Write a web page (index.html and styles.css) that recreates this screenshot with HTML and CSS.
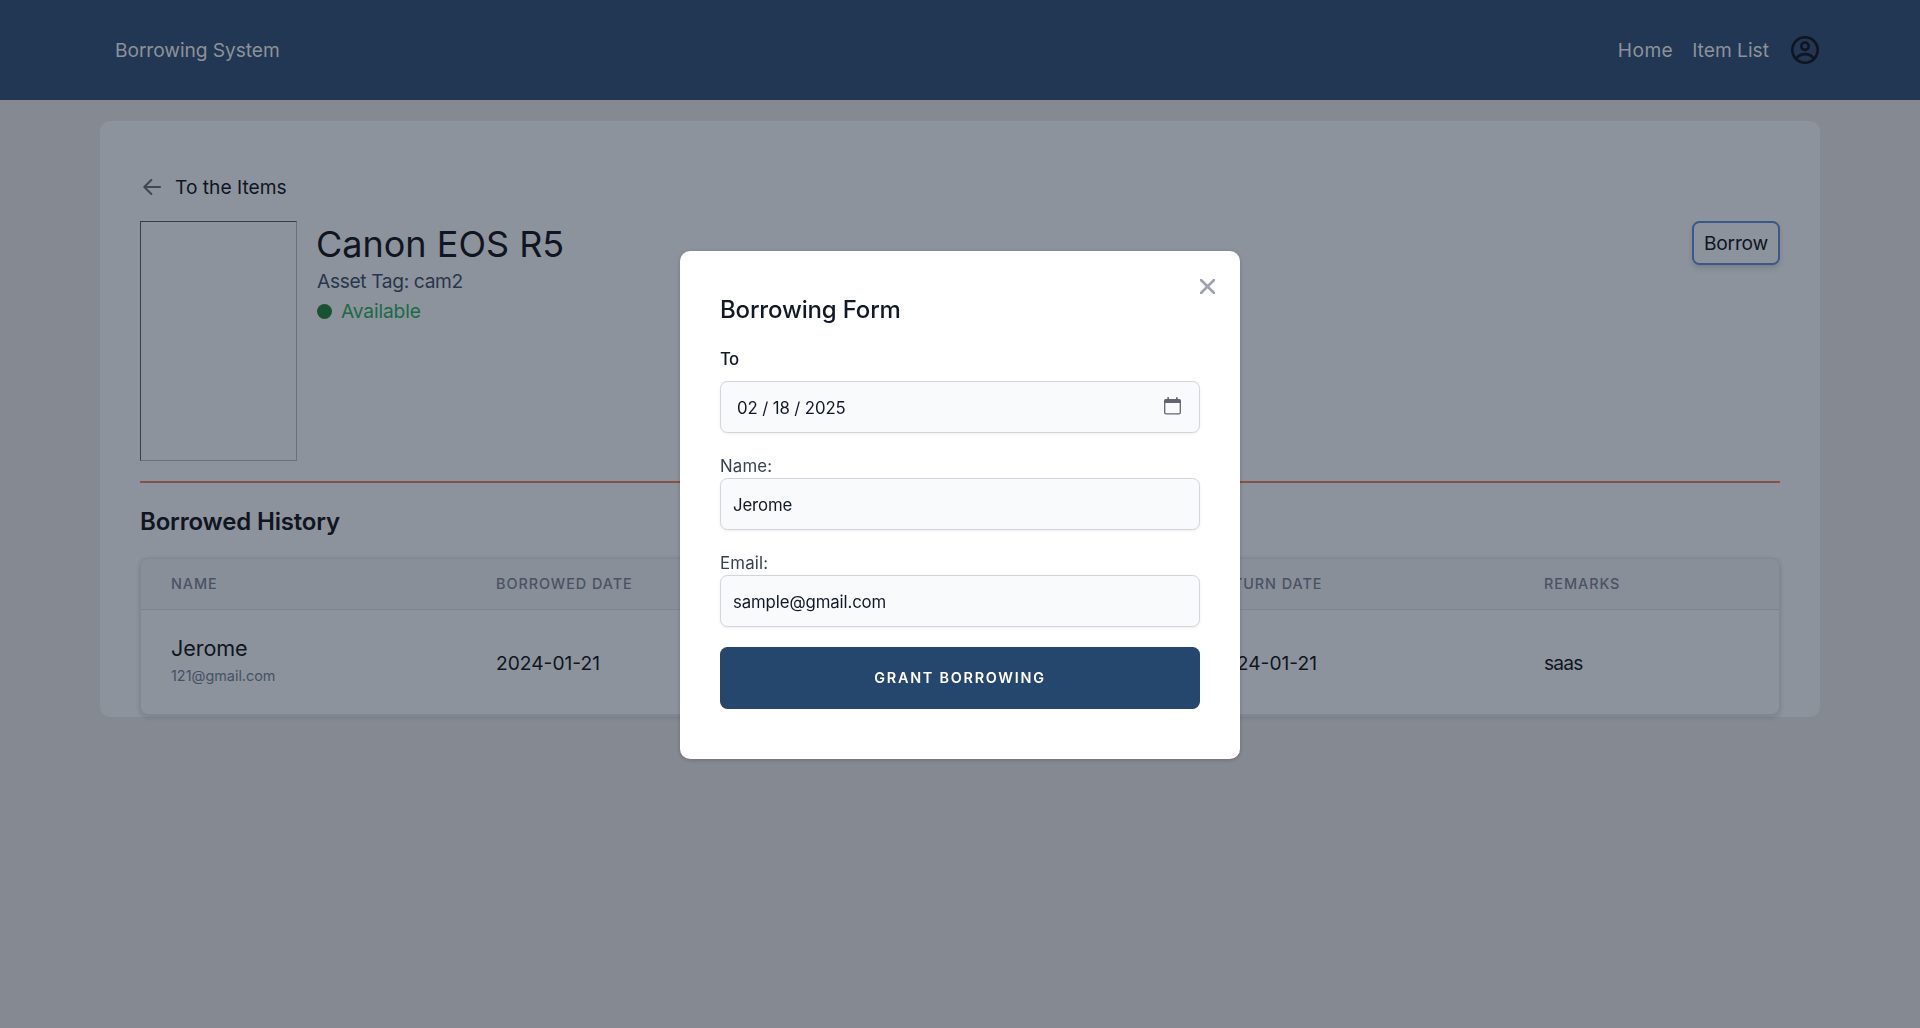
FILE: index.html
```html
<!DOCTYPE html>
<html lang="en">
<head>
  <meta charset="utf-8">
  <title>Borrowing System</title>
  <link rel="stylesheet" href="styles.css">
</head>
<body>
  <nav class="navbar">
    <a class="brand">Borrowing System</a>
    <div class="nav-links">
      <a class="nav-home">Home</a>
      <a>Item List</a>
      <svg class="avatar" viewBox="0 0 30 30">
        <circle cx="15" cy="15" r="12.7"/>
        <circle cx="15" cy="11.2" r="3.7"/>
        <path d="M6.3 23.6C8.2 20.7 11.2 19.1 15 19.1s6.8 1.6 8.7 4.5"/>
      </svg>
    </div>
  </nav>

  <main class="card">
    <a class="back">
      <svg class="back-icon" viewBox="0 0 18 16"><path d="M17 8H1.5M8.3 1 1.3 8l7 7"/></svg>
      <span>To the Items</span>
    </a>
    <section class="item">
      <div class="photo"></div>
      <div class="details">
        <h1 class="item-name">Canon EOS R5</h1>
        <p class="asset">Asset Tag: cam2</p>
        <p class="status"><i class="dot"></i><span>Available</span></p>
      </div>
      <button class="borrow">Borrow</button>
    </section>
    <h2 class="history-title">Borrowed History</h2>
    <div class="table">
      <div class="row head">
        <span>NAME</span><span>BORROWED DATE</span><span></span><span>RETURN DATE</span><span>REMARKS</span>
      </div>
      <div class="row body">
        <div class="person"><span class="person-name">Jerome</span><span class="person-mail">121@gmail.com</span></div>
        <span class="date">2024-01-21</span><span></span><span class="date">2024-01-21</span><span class="remark">saas</span>
      </div>
    </div>
  </main>

  <div class="overlay">
    <form class="modal">
      <svg class="close" viewBox="0 0 15 15"><path d="M1 1l13 13M14 1 1 14"/></svg>
      <h3 class="modal-title">Borrowing Form</h3>
      <label class="label-to">To</label>
      <div class="field date-field">
        <span class="date-value">02 / 18 / 2025</span>
        <svg class="calendar" viewBox="0 0 17 18">
          <path class="cal-frame" d="M.7 4v11.4q0 1.4 1.4 1.4h12.8q1.4 0 1.4-1.4V4"/>
          <path d="M0 6V3.600Q0 2 1.600 2H3.300V.2H5V2h7V.2h1.700V2h1.700Q17 2 17 3.600V6z"/>
        </svg>
      </div>
      <label class="label">Name:</label>
      <div class="field">Jerome</div>
      <label class="label">Email:</label>
      <div class="field">sample@gmail.com</div>
      <button class="submit" type="button">GRANT BORROWING</button>
    </form>
  </div>
</body>
</html>
```
FILE: styles.css
```css
* { box-sizing: border-box; margin: 0; padding: 0; }
body {
  min-height: 1028px;
  background: #858992;
  color: #10151f;
  font: 19.2px/30px Inter, sans-serif;
}
button { font: inherit; color: inherit; }

.navbar {
  height: 100px;
  padding: 0 100px 0 114px;
  display: flex;
  align-items: center;
  justify-content: space-between;
  background: #223754;
  color: #8d929a;
}
.brand { padding-left: 1px; letter-spacing: -.07px; }
.nav-links { display: flex; align-items: center; }
.nav-home { margin-right: 19px; letter-spacing: .4px; }
.avatar { width: 30px; height: 30px; margin-left: 21px; fill: none; stroke: #10151f; stroke-width: 2.6; }

.card {
  height: 596px;
  margin: 21px 100px 0;
  padding: 51px 40px 0;
  border-radius: 10px;
  background: #8c939d;
}
.back { display: flex; align-items: center; height: 30px; letter-spacing: 0; }
.back-icon { width: 18px; height: 16px; margin: 0 14px 0 3px; fill: none; stroke: #434751; stroke-width: 2; stroke-linecap: round; stroke-linejoin: round; }
.item {
  display: flex;
  align-items: flex-start;
  height: 262px;
  margin-top: 19px;
  border-bottom: 2px solid #8a5045;
}
.photo { width: 157px; height: 240px; border: 1px solid; border-color: #363c46 #6b707a #6b707a #363c46; }
.details { margin-left: 20px; flex: 1; }
.item-name { margin-left: -1px; padding-top: 1px; font-size: 36px; line-height: 44px; font-weight: 400; }
.asset { color: #29364c; letter-spacing: -.36px; }
.status { display: flex; align-items: center; color: #1c6945; letter-spacing: -.15px; }
.dot { width: 15px; height: 15px; margin-right: 9px; border-radius: 50%; background: #185331; }
.borrow {
  width: 88px;
  height: 44px;
  border: 2px solid #395a86;
  border-radius: 7.5px;
  background: #8c939d;
  box-shadow: 0 4px 6px -1px rgba(17, 24, 39, .12), 0 2px 4px -2px rgba(17, 24, 39, .12);
  letter-spacing: -.2px;
}
.history-title { margin-top: 20px; font-size: 24px; line-height: 37px; font-weight: 600; letter-spacing: -.17px; }
.table {
  height: 158px;
  margin-top: 18px;
  border: 1px solid #818792;
  border-width: 1px 1px 2px;
  border-radius: 8px;
  overflow: hidden;
  box-shadow: 0 1px 4px rgba(30, 34, 54, .2);
}
.row { display: grid; grid-template-columns: 325px 320px 397px 331px 1fr; padding-left: 30px; align-items: center; }
.head { height: 51px; background: #888f99; border-bottom: 1px solid #7f8590; color: #4b5264; font-size: 14.4px; font-weight: 450; letter-spacing: .95px; }
.body { height: 104px; padding-top: 2px; }
.person { display: flex; flex-direction: column; padding-bottom: 8px; }
.person-name { font-size: 21.6px; line-height: 33px; letter-spacing: -.1px; }
.person-mail { font-size: 14.4px; line-height: 22px; color: #465164; }
.date { letter-spacing: 0; }
.remark { letter-spacing: -.8px; }

.overlay { position: fixed; inset: 0; display: flex; justify-content: center; align-items: flex-start; padding-top: 251px; }
.modal {
  position: relative;
  display: flex;
  flex-direction: column;
  width: 560px;
  height: 508px;
  padding: 41px 40px 40px;
  border-radius: 10px;
  background: #fff;
  color: #111827;
  font-size: 16.8px;
  line-height: 25px;
  box-shadow: 0 1px 4px rgba(0, 0, 0, .2);
}
.close { position: absolute; top: 28px; right: 25px; width: 15px; height: 15px; fill: none; stroke: #9ca3af; stroke-width: 2.6; stroke-linecap: round; }
.modal-title { font-size: 24px; line-height: 35px; font-weight: 500; letter-spacing: -.17px; }
.label-to { margin: 20px 0 9px; font-weight: 500; letter-spacing: -.6px; }
.label { margin: 21px 0 -1px; color: #374151; letter-spacing: .2px; }
.field {
  height: 52px;
  padding: 2px 13px 0 12px;
  display: flex;
  align-items: center;
  border: 1px solid #d1d5db;
  border-radius: 7.5px;
  background: #f9fafb;
  box-shadow: 0 1px 3px rgba(0, 0, 0, .07);
  letter-spacing: -.12px;
}
.date-field { justify-content: space-between; padding: 0 18px 0 16px; }
.date-value { padding-top: 2px; }
.calendar { width: 17px; height: 18px; margin-top: -2px; fill: #60656f; }
.cal-frame { fill: none; stroke: #60656f; stroke-width: 1.3; }
.submit {
  height: 62px;
  margin-top: 20px;
  padding-bottom: 2px;
  border: 0;
  border-radius: 7.5px;
  background: #25476d;
  color: #fff;
  font-size: 14.4px;
  font-weight: 600;
  letter-spacing: 1.75px;
}
```
